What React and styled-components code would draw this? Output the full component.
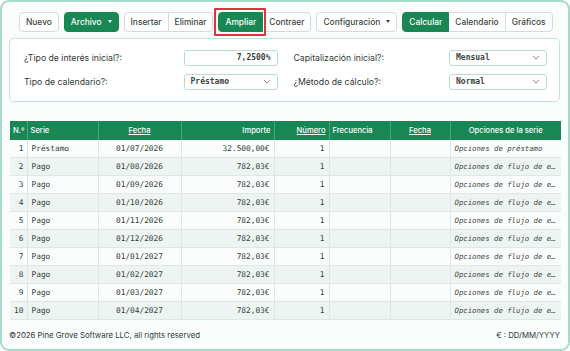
import React from 'react';
import styled, { createGlobalStyle, css } from 'styled-components';

const Global = createGlobalStyle`
  html, body { margin: 0; padding: 0; background: #ffffff; }
  body { font-family: Inter, "Noto Sans", sans-serif; }
  * { box-sizing: border-box; }
`;

const Frame = styled.div`
  width: 570px;
  height: 351px;
  border: 2px solid #a6dac8;
  border-radius: 9px;
  background: #fbfdfc;
  padding: 6px 7px 0 7px;
  display: flex;
  flex-direction: column;
  overflow: hidden;
`;

const Toolbar = styled.div`
  display: flex;
  align-items: center;
  gap: 5px;
  padding: 2px 0 0 10px;
  height: 26px;
`;

const Group = styled.div`
  display: flex;
  & > button:not(:first-child) { border-top-left-radius: 0; border-bottom-left-radius: 0; margin-left: -1px; }
  & > button:not(:last-child) { border-top-right-radius: 0; border-bottom-right-radius: 0; }
`;

const Btn = styled.button`
  position: relative;
  height: 20px;
  padding: 0 6px;
  font-family: Inter, "Noto Sans", sans-serif;
  font-size: 8.4px;
  font-weight: 500;
  border-radius: 4px;
  border: 1px solid #d3dcd8;
  background: #ffffff;
  color: #3a4540;
  display: flex;
  align-items: center;
  gap: 6px;
  cursor: pointer;
  ${p => p.$primary && css`
    background: #198754;
    border-color: #198754;
    color: #ffffff;
    z-index: 1;
  `}
  ${p => p.$focus && css`
    z-index: 2;
    &::after {
      content: '';
      position: absolute;
      inset: -5px -4px -5px -5px;
      border: 2px solid #d9363e;
      border-radius: 1px;
      pointer-events: none;
    }
  `}
`;

const Caret = styled.span`
  width: 0;
  height: 0;
  border-left: 2.5px solid transparent;
  border-right: 2.5px solid transparent;
  border-top: 3px solid currentColor;
`;

const Panel = styled.div`
  margin-top: 4px;
  margin-right: 1px;
  height: 64px;
  background: #ffffff;
  border: 1px solid #bfe3d6;
  border-radius: 5px;
  padding: 11px 12px 0 14px;
  display: grid;
  grid-template-columns: 1fr 1fr;
  column-gap: 16px;
  row-gap: 8px;
  align-content: start;
`;

const Field = styled.div`
  display: flex;
  align-items: center;
  justify-content: space-between;
  height: 16px;
`;

const Label = styled.span`
  font-size: 8.7px;
  color: #2f3a35;
`;

const Control = styled.div`
  width: ${p => p.$w}px;
  height: 16px;
  border: 1px solid #b9dccf;
  border-radius: 3px;
  background: #ffffff;
  display: flex;
  align-items: center;
  justify-content: ${p => (p.$right ? 'flex-end' : 'space-between')};
  padding: 0 6px 0 6px;
  font-family: "DejaVu Sans Mono", "Liberation Mono", monospace;
  font-size: 8px;
  font-weight: bold;
  color: #3b4541;
`;

const Chevron = () => (
  <svg width="8" height="5" viewBox="0 0 8 5">
    <path d="M1 1l3 3 3-3" fill="none" stroke="#8a948f" strokeWidth="1" />
  </svg>
);

const TableWrap = styled.div`
  margin-top: 19px;
  margin-left: 1px;
  height: 202px;
  overflow: hidden;
`;

const Table = styled.table`
  width: 551px;
  table-layout: fixed;
  border-collapse: collapse;
`;

const Th = styled.th`
  background: #198754;
  color: #ffffff;
  font-family: Inter, "Noto Sans", sans-serif;
  font-weight: 500;
  font-size: 7.6px;
  height: 19px;
  padding: 0 3px;
  text-align: ${p => p.$align || 'left'};
  border-right: 1px solid #4aa57c;
  text-decoration: ${p => (p.$link ? 'underline' : 'none')};
  white-space: nowrap;
  overflow: hidden;
  &:last-child { border-right: none; }
`;

const Tr = styled.tr`
  background: ${p => (p.$alt ? '#eef4f2' : '#fbfdfc')};
`;

const Td = styled.td`
  height: 18px;
  padding: 0 ${p => (p.$tight ? 3 : 4)}px;
  border: 1px solid #dfe6e3;
  border-top: none;
  font-family: "DejaVu Sans Mono", "Liberation Mono", monospace;
  font-size: 7.8px;
  color: #333c38;
  text-align: ${p => p.$align || 'left'};
  white-space: nowrap;
  overflow: hidden;
  text-overflow: ellipsis;
  ${p => p.$italic && css`font-style: italic; font-size: 7.3px; color: #3d4743;`}
  &:first-child { border-left: none; }
  &:last-child { border-right: none; }
`;

const Footer = styled.div`
  display: flex;
  justify-content: space-between;
  align-items: center;
  height: 28px;
  padding: 0 1px 0 0;
  font-size: 7.8px;
  color: #2f3a35;
`;

const dates = [
  '01/07/2026', '01/08/2026', '01/09/2026', '01/10/2026', '01/11/2026',
  '01/12/2026', '01/01/2027', '01/02/2027', '01/03/2027', '01/04/2027',
];

const rows = dates.map((d, i) => ({
  n: i + 1,
  serie: i === 0 ? 'Préstamo' : 'Pago',
  fecha: d,
  importe: i === 0 ? '32.500,00€' : '782,03€',
  opciones: i === 0 ? 'Opciones de préstamo' : 'Opciones de flujo de efectivo',
}));

const columns = [17, 71, 83, 93, 55, 61, 60, 111];

export default function App() {
  return (
    <>
      <Global />
      <Frame>
        <Toolbar>
          <Btn>Nuevo</Btn>
          <Btn $primary>Archivo <Caret /></Btn>
          <Group>
            <Btn>Insertar</Btn>
            <Btn>Eliminar</Btn>
          </Group>
          <Group>
            <Btn $primary $focus>Ampliar</Btn>
            <Btn>Contraer</Btn>
          </Group>
          <Btn>Configuración <Caret /></Btn>
          <Group>
            <Btn $primary>Calcular</Btn>
            <Btn>Calendario</Btn>
            <Btn>Gráficos</Btn>
          </Group>
        </Toolbar>

        <Panel>
          <Field>
            <Label>¿Tipo de interés inicial?:</Label>
            <Control $w={94} $right>7,2500%</Control>
          </Field>
          <Field>
            <Label>Capitalización inicial?:</Label>
            <Control $w={98}>Mensual <Chevron /></Control>
          </Field>
          <Field>
            <Label>Tipo de calendario?:</Label>
            <Control $w={94}>Préstamo <Chevron /></Control>
          </Field>
          <Field>
            <Label>¿Método de cálculo?:</Label>
            <Control $w={98}>Normal <Chevron /></Control>
          </Field>
        </Panel>

        <TableWrap>
          <Table>
            <colgroup>
              {columns.map((w, i) => <col key={i} style={{ width: w }} />)}
            </colgroup>
            <thead>
              <tr>
                <Th>N.º</Th>
                <Th>Serie</Th>
                <Th $align="center" $link>Fecha</Th>
                <Th $align="right">Importe</Th>
                <Th $align="right" $link>Número</Th>
                <Th>Frecuencia</Th>
                <Th $align="center" $link>Fecha</Th>
                <Th $align="center">Opciones de la serie</Th>
              </tr>
            </thead>
            <tbody>
              {rows.map((r, i) => (
                <Tr key={r.n} $alt={i % 2 === 1}>
                  <Td $align="right" $tight>{r.n}</Td>
                  <Td>{r.serie}</Td>
                  <Td $align="center">{r.fecha}</Td>
                  <Td $align="right">{r.importe}</Td>
                  <Td $align="right">1</Td>
                  <Td></Td>
                  <Td></Td>
                  <Td $italic>{r.opciones}</Td>
                </Tr>
              ))}
              <Tr>
                {columns.map((w, i) => <Td key={i}></Td>)}
              </Tr>
            </tbody>
          </Table>
        </TableWrap>

        <Footer>
          <span>©2026 Pine Grove Software LLC, all rights reserved</span>
          <span>€ : DD/MM/YYYY</span>
        </Footer>
      </Frame>
    </>
  );
}
